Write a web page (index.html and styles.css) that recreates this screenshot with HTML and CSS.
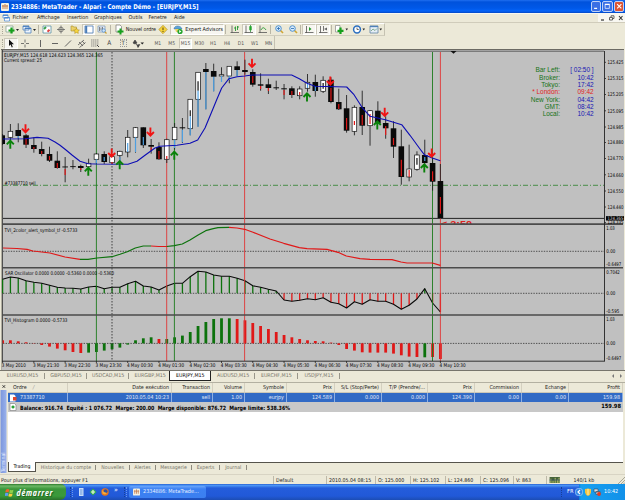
FILE: index.html
```
<!DOCTYPE html>
<html lang="fr">
<head>
    <meta charset="UTF-8">
    <meta name="viewport" content="width=device-width, initial-scale=1.0">
    <title>2334886: MetaTrader - Alpari</title>
    <link rel="stylesheet" href="styles.css">
</head>
<body>

    <!-- Title bar -->
    <header class="titlebar">
        <svg class="app-icon" viewBox="0 0 8 8"><rect width="8" height="8" rx="1" fill="#f4f1e2"/><path d="M1 3h6M2 2v4M4 1v5M6 2v4" stroke="#c07b4e" stroke-width=".9"/></svg>
        <svg class="title-text" viewBox="0 0 190 10"><text x="0" y="7.4" textLength="187.5" lengthAdjust="spacingAndGlyphs">2334886: MetaTrader - Alpari - Compte Démo - [EURJPY,M15]</text></svg>
        <div class="win-buttons">
            <svg viewBox="0 0 10 10"><path d="M2.5 7.5h3.5" stroke="#fff" stroke-width="1.4"/></svg>
            <svg viewBox="0 0 10 10"><path d="M2.5 3v4.5h5V3z" fill="none" stroke="#fff" stroke-width=".8"/><path d="M2.2 2.8h5.6" stroke="#fff" stroke-width="1.3"/></svg>
            <svg class="close" viewBox="0 0 10 10"><path d="M2.5 2.5l5 5M7.5 2.5l-5 5" stroke="#fff" stroke-width="1.3"/></svg>
        </div>
    </header>

    <!-- Menu -->
    <nav class="menu">
        <svg class="menu-icon" viewBox="0 0 8 8"><path d="M1 1h5v3H1zM2.5 3.5h5v3.5h-5z" fill="#fff" stroke="#5b93d8" stroke-width=".8"/><path d="M1 1.3h5M2.5 3.8h5" stroke="#3f80d0"/></svg>
        <span class="m1">Fichier</span><span class="m2">Affichage</span><span class="m3">Insertion</span><span class="m4">Graphiques</span><span class="m5">Outils</span><span class="m6">Fenetre</span><span class="m7">Aide</span>
        <div class="mdi-buttons">
            <svg viewBox="0 0 9 8"><path d="M3 6h3" stroke="#333" stroke-width="1.2"/></svg>
            <svg viewBox="0 0 9 8"><path d="M2.5 3.5h3v2.5h-3zM4 3.5V1.8h3v2.7H5.5" fill="none" stroke="#444" stroke-width=".8"/></svg>
            <svg viewBox="0 0 9 8"><path d="M3 2l3.5 4M6.5 2L3 6" stroke="#333" stroke-width="1.1"/></svg>
        </div>
    </nav>

    <!-- Standard toolbar -->
    <div class="toolbar main-bar">
        <i class="grip"></i>
        <span class="tool w17"><svg viewBox="0 0 14 11"><path d="M1 2h7v6H1z" fill="#fff" stroke="#7d9c8b" stroke-width=".7"/><path d="M6.5 3.5v6M3.5 6.5h6" stroke="#16a01c" stroke-width="2.2"/><path d="M11 5h3l-1.5 2z" fill="#222"/></svg></span>
        <span class="tool w17"><svg viewBox="0 0 14 11"><path d="M1 2h6v4H1zM3 4h6v5H3z" fill="#eef5fd" stroke="#5484bd" stroke-width=".8"/><path d="M1 2.3h6M3 4.4h6" stroke="#3f78bd"/><path d="M11 5h3l-1.5 2z" fill="#222"/></svg></span>
        <i class="sep"></i>
        <span class="tool"><svg viewBox="0 0 14 11"><path d="M3 2h8v7H3z" fill="#fff" stroke="#5e92a6" stroke-width=".8"/><path d="M4 5l2-2" stroke="#36a04a" stroke-width="2"/><path d="M7.5 7.8l2-2" stroke="#d44" stroke-width="2"/></svg></span>
        <span class="tool"><svg viewBox="0 0 14 11"><circle cx="7" cy="5.5" r="2.3" fill="none" stroke="#666" stroke-width=".8"/><path d="M7 1.5v8M3 5.5h8" stroke="#666" stroke-width=".8"/></svg></span>
        <span class="tool"><svg viewBox="0 0 14 11"><path d="M3 3V2h2l.5 1h3v4H3z" fill="#ecd169" stroke="#a8902d" stroke-width=".6"/><path d="M8.5 4l.9 1.8 2 .3-1.4 1.3.3 2-1.8-1-1.8 1 .3-2L5.6 6.1l2-.3z" fill="#f8d742" stroke="#a88416" stroke-width=".5"/></svg></span>
        <span class="tool on"><svg viewBox="0 0 14 11"><path d="M3 2h8v7H3z" fill="#fff" stroke="#4a7cb8" stroke-width=".8"/><path d="M4.2 2v7" stroke="#4a7cb8" stroke-width="2"/></svg></span>
        <span class="tool"><svg viewBox="0 0 14 11"><path d="M3 2h7v6H3z" fill="#e5eefa" stroke="#7b95b5" stroke-width=".7"/><path d="M4.5 3v4M6 3.5v3M7.5 3v4" stroke="#555" stroke-width=".7"/><circle cx="8.7" cy="6.5" r="1.7" fill="#cde4fb" stroke="#4a86c4" stroke-width=".7"/><path d="M10 8l1.5 1.5" stroke="#caa037" stroke-width="1.2"/></svg></span>
        <i class="sep"></i>
        <span class="tool order"><svg viewBox="0 0 14 11"><path d="M4 1h4l1.5 1.5V8H4z" fill="#fff" stroke="#777" stroke-width=".7"/><path d="M8.5 4.5v6M5.5 7.5h6" stroke="#16a01c" stroke-width="2"/></svg>Nouvel ordre</span>
        <span class="tool"><svg viewBox="0 0 14 11"><path d="M7 1.3l4.2 4.2L7 9.7 2.8 5.5z" fill="#f7d43c" stroke="#a98718" stroke-width=".6"/><path d="M7 3.5v2.7M7 7v1" stroke="#554310"/></svg></span>
        <span class="tool on expert"><svg viewBox="0 0 14 11"><path d="M3 5c0-4 7-4 8 0z" fill="#5da4d8" stroke="#386f9c" stroke-width=".5"/><path d="M4 5h4v3H5z" fill="#efd065"/><circle cx="9" cy="7.5" r="2.6" fill="#23a52c"/><path d="M8.2 6v3l2.2-1.5z" fill="#fff"/></svg>Expert Advisors</span>
        <i class="sep s4"></i>
        <span class="tool"><svg viewBox="0 0 14 11"><path d="M4 1.5V9M2.5 8.5h8.5" stroke="#555" stroke-width=".8"/><path d="M6 4h1.5M7.5 2.5V7M9.5 2v4M9.5 3H11" stroke="#279832" stroke-width=".9" fill="none"/></svg></span>
        <span class="tool on"><svg viewBox="0 0 14 11"><path d="M4 1.5V9M2.5 8.5h8.5" stroke="#555" stroke-width=".8"/><path d="M8.5 1v7" stroke="#178a22" stroke-width=".7"/><path d="M7.3 2.2h2.4v4H7.3z" fill="#23a52c"/></svg></span>
        <span class="tool"><svg viewBox="0 0 14 11"><path d="M4 1.5V9M2.5 8.5h8.5" stroke="#555" stroke-width=".8"/><path d="M5 6c1.5-3 3-3 5 0" stroke="#279832" stroke-width=".9" fill="none"/></svg></span>
        <i class="sep"></i>
        <span class="tool"><svg viewBox="0 0 14 11"><path d="M8.5 6.5L11 9" stroke="#cfa534" stroke-width="1.6"/><circle cx="6.5" cy="4.5" r="2.8" fill="#d6ebfc" stroke="#4187cb" stroke-width=".9"/><path d="M5 4.5h3M6.5 3v3" stroke="#2769b0" stroke-width=".8"/></svg></span>
        <span class="tool"><svg viewBox="0 0 14 11"><path d="M8.5 6.5L11 9" stroke="#cfa534" stroke-width="1.6"/><circle cx="6.5" cy="4.5" r="2.8" fill="#d6ebfc" stroke="#4187cb" stroke-width=".9"/><path d="M5 4.5h3" stroke="#2769b0" stroke-width=".8"/></svg></span>
        <i class="sep"></i>
        <span class="tool on"><svg viewBox="0 0 14 11"><path d="M4.5 2v7M3 8.5h8.5" stroke="#555" stroke-width=".8"/><path d="M7 3v4l2.5-2z" fill="#239a2d"/></svg></span>
        <span class="tool on"><svg viewBox="0 0 14 11"><path d="M4.5 2v7M3 8.5h8.5M7.5 2v5" stroke="#555" stroke-width=".8"/><path d="M11 3.5v3L8 5z" fill="#666"/></svg></span>
        <i class="sep"></i>
        <span class="tool w17"><svg viewBox="0 0 14 11"><path d="M1.5 1.5H6V8H1.5z" fill="#fff" stroke="#888" stroke-width=".7"/><path d="M6.5 3.5v6.5M3.5 6.8h6" stroke="#16a01c" stroke-width="2.2"/><path d="M11.5 4.5h2.5l-1.25 2z" fill="#222"/></svg></span>
        <span class="tool w17"><svg viewBox="0 0 14 11"><circle cx="6" cy="5.5" r="3.4" fill="#fff" stroke="#2a6ec0" stroke-width="1.5"/><path d="M6 3.5v2h1.8" fill="none" stroke="#333" stroke-width=".7"/><path d="M11.5 4.5h2.5l-1.25 2z" fill="#222"/></svg></span>
        <span class="tool w17"><svg viewBox="0 0 14 11"><path d="M2 2h8v7H2z" fill="#e5eef6" stroke="#6384a4" stroke-width=".8"/><path d="M2 2.5h8" stroke="#4e80b8" stroke-width="1.3"/><path d="M3 7l2-2 2 1.5 2-2" fill="none" stroke="#6a9d78" stroke-width=".8"/><path d="M11.5 4.5h2.5l-1.25 2z" fill="#222"/></svg></span>
    </div>

    <!-- Line studies and periods -->
    <div class="toolbar draw-bar">
        <i class="grip"></i>
        <span class="tool on"><svg viewBox="0 0 14 11"><path d="M5 1.5v6.5l1.6-1.5 1.2 3 1-.5-1.1-2.7H10z" fill="#111"/></svg></span>
        <span class="tool"><svg viewBox="0 0 14 11"><path d="M7 1.5v3M7 6.5v3M3 5.5h3M8 5.5h3" stroke="#555" stroke-width=".8"/></svg></span>
        <i class="sep"></i>
        <span class="tool"><svg viewBox="0 0 14 11"><path d="M7.5 2v7" stroke="#555" stroke-width=".9"/></svg></span>
        <span class="tool"><svg viewBox="0 0 14 11"><path d="M5 5.5h6" stroke="#555" stroke-width=".9"/></svg></span>
        <span class="tool"><svg viewBox="0 0 14 11"><path d="M4 8.5l6-6" stroke="#555" stroke-width=".9"/></svg></span>
        <span class="tool"><svg viewBox="0 0 14 11"><path d="M3 7l6-5M4.5 9.5l6-5M4 4l4 4M7 3l3 3" stroke="#555" stroke-width=".8"/></svg></span>
        <span class="tool"><svg viewBox="0 0 14 11"><path d="M3 2h8M3 4h8M3 6h8M3 8h6" stroke="#666" stroke-width=".7" stroke-dasharray="1.5 .5"/><path d="M9 7l2 2" stroke="#444"/></svg></span>
        <span class="tool letter">A</span>
        <span class="tool letter boxed"><b>T</b></span>
        <span class="tool"><svg viewBox="0 0 14 11"><path d="M3 5l2-3 2 3-2 1zM6 6l3 3M8 9.5L9.8 6.5 7 7z" fill="#444" stroke="#444" stroke-width=".7"/><path d="M10.5 4.5H14l-1.75 2z" fill="#222"/></svg></span>
        <i class="sep s8"></i>
        <span class="tool period">M1</span><span class="tool period">M5</span><span class="tool period on">M15</span><span class="tool period">M30</span><span class="tool period">H1</span><span class="tool period">H4</span><span class="tool period">D1</span><span class="tool period">W1</span><span class="tool period">MN</span>
    </div>

    <!-- Chart, filled in by chart.js -->
    <svg id="chart" class="chart" viewBox="0 49 625 321" width="625" height="321"></svg>

    <div class="chart-tabs">
        <span>EURUSD,M15</span><span>GBPUSD,M15</span><span>USDCAD,M15</span><span>EURGBP,M15</span><span class="active">EURJPY,M15</span><span class="wide">AUDUSD,M15</span><span class="wide">EURCHF,M15</span><span>USDJPY,M15</span>
        <svg class="scroll" viewBox="0 0 14 8"><path d="M4 2v4L2 4zM10 2v4l2-2z" fill="#777"/></svg>
    </div>

    <!-- Terminal -->
    <section class="terminal">
        <aside class="side">
            <svg viewBox="0 0 7 7"><path d="M1.8 2l3 3M4.8 2l-3 3" stroke="#222"/></svg>
            <div class="side-label">Terminal</div>
        </aside>
        <div class="terminal-body">
            <div class="row head">
                <span class="first">Ordre <em>/</em></span><span>Date exécution</span><span>Transaction</span><span>Volume</span><span>Symbole</span><span>Prix</span><span>S/L (Stop/Perte)</span><span>T/P (Prendre/...</span><span>Prix</span><span>Commission</span><span>Echange</span><span>Profit</span>
            </div>
            <div class="row selected">
                <span class="first"><svg viewBox="0 0 8 8"><path d="M1 .5h4l1.5 1.5v5.5H1z" fill="#fff"/><path d="M4 3h3.5v3.5H4z" fill="#e0452c"/></svg>73387710</span><span>2010.05.04 10:23</span><span>sell</span><span>1.00</span><span>eurjpy</span><span>124.589</span><span>0.000</span><span>0.000</span><span>124.390</span><span>0.00</span><span>0.00</span><span>159.98</span>
            </div>
            <div class="balance">
                <svg class="doc" viewBox="0 0 8 8"><path d="M1 .5h4.5L7 2v5.5H1z" fill="#fff" stroke="#777" stroke-width=".6"/><path d="M4 2.5v3M2.5 4h3" stroke="#159a24" stroke-width="1.3"/></svg>
                <svg class="balance-text" viewBox="0 0 275 9"><text x="0" y="6.5" textLength="270" lengthAdjust="spacingAndGlyphs">Balance: 916.74 &#160;Equité : 1 076.72 &#160;Marge: 200.00 &#160;Marge disponible: 876.72 &#160;Marge limite: 538.36%</text></svg>
                <span class="total">159.98</span>
            </div>
            <div class="empty"></div>
            <div class="terminal-tabs">
                <span class="active">Trading</span><span class="t1">Historique du compte</span><span class="t2">Nouvelles</span><span class="t3">Alertes</span><span class="t4">Messagerie</span><span class="t5">Experts</span><span class="t6">Journal</span>
            </div>
        </div>
    </section>

    <!-- Status bar -->
    <footer class="status">
        <span class="help">Pour plus d'informations, appuyer F1</span><span class="c53">Default</span><span class="c49">2010.05.04 08:15</span><span class="c35">O: 125.000</span><span class="c35">H: 125.102</span><span class="c35">L: 124.860</span><span class="c33">C: 125.096</span><span class="c33">V: 863</span>
        <span class="traffic"><svg viewBox="0 0 12 7"><path d="M0 0h12v7H0z" fill="#45633a"/><path d="M1.5 7V2M4 7V4M6.5 7V1M9 7V3M11 7V1" stroke="#c8cf70" stroke-width="1"/><path d="M0 3.5h12" stroke="#314a6c" stroke-width=".8"/></svg>140/1 kb</span>
        <svg class="resize" viewBox="0 0 8 8"><path d="M1 8l7-7M4 8l4-4M6.5 8L8 6.5" stroke="#aaa695"/></svg>
    </footer>

    <!-- Windows taskbar -->
    <div class="taskbar">
        <div class="start">
            <svg viewBox="0 0 10 10"><path d="M1 2q2-1.5 3.8-.3L4 5Q2.2 4 .3 5z" fill="#f0622d"/><path d="M5.4 2q2 1 4 0L8.7 5.2q-2 1-4 0z" fill="#8ed04b"/><path d="M.2 5.7q1.8-1 3.6 0L3 9Q1.3 8-.5 9z" fill="#5c9cf2"/><path d="M4.5 6q2 1 4 0L7.7 9.2q-2 1-4 0z" fill="#f9d03a"/></svg>
            démarrer
        </div>
        <i class="dots"></i>
        <div class="quick">
            <svg viewBox="0 0 8 8"><path d="M2 0h4.5v8H2z" fill="#c9ddf8"/><path d="M3 2h2.5M3 4h2.5M3 6h2.5" stroke="#4b80d1" stroke-width=".8"/></svg>
            <svg viewBox="0 0 8 8"><path d="M4 .5L7.5 4 4 7.5.5 4z" fill="#35b04a"/><path d="M2 4h4M4 2v4" stroke="#e8f8e0" stroke-width="1.2"/></svg>
            <svg viewBox="0 0 8 8"><circle cx="4" cy="4" r="3.7" fill="#e8751c"/><circle cx="4.5" cy="3.3" r="2" fill="#31529f"/><path d="M1 2l2 2 3 1-2 1.5-2.5-1z" fill="#f6ad3a"/></svg>
            <span>»</span>
        </div>
        <i class="dots"></i>
        <div class="task"><svg viewBox="0 0 8 8"><rect width="8" height="8" rx="1" fill="#f4f1e2"/><path d="M1 3h6M2 2v4M4 1v5M6 2v4" stroke="#c07b4e" stroke-width=".9"/></svg>2334886: MetaTrade...</div>
        <i class="dots last"></i>
        <span class="lang">FR</span>
        <div class="tray">
            <svg viewBox="0 0 8 8"><circle cx="4" cy="4" r="3.8" fill="#2f86e8" stroke="#b8dcff" stroke-width=".6"/><path d="M5 2L3 4l2 2" fill="none" stroke="#fff" stroke-width="1.2"/></svg>
            <svg viewBox="0 0 8 8"><path d="M1 1q3 0 3-.7Q4 1 7 1v3.5Q6.5 7 4 8 1.5 7 1 4.5z" fill="#f3c341"/><path d="M4 1v6" stroke="#fff1b0"/></svg>
            <svg viewBox="0 0 8 8"><path d="M1 1h4v3H1zM3 3.5h4v3H3z" fill="#cfe0ee" stroke="#345" stroke-width=".6"/><circle cx="6" cy="6" r="1.9" fill="#e23b24"/></svg>
            <span>10:42</span>
        </div>
    </div>

    <script src="chart.js"></script>
</body>
</html>
```
FILE: styles.css
```
* {
    box-sizing: border-box;
    margin: 0;
    padding: 0;
}

body {
    width: 625px;
    height: 500px;
    overflow: hidden;
    display: flex;
    flex-direction: column;
    background-color: #ece9d8;
    font-family: "DejaVu Sans Condensed", "DejaVu Sans", sans-serif;
    font-stretch: condensed;
    font-size: 5.4px;
    line-height: 1;
    color: #1c1c1c;
    white-space: nowrap;
}

svg {
    display: block;
    flex: none;
}

/* Title bar */
.titlebar {
    height: 13px;
    display: flex;
    align-items: center;
    padding-left: 1px;
    background: linear-gradient(#1f6ff0 0, #0052dc 2px, #0058e8 8px, #0463f8 11px, #0447c4 13px);
    color: #fff;
}

.app-icon {
    width: 8px;
    height: 8px;
    margin-right: 2px;
}

.title-text {
    width: 190px;
    height: 10px;
    fill: #fff;
    font-size: 6.6px;
    font-weight: bold;
}

.win-buttons {
    display: flex;
    gap: 1px;
    margin-left: auto;
    padding-right: 1px;
}

.win-buttons svg {
    width: 10.5px;
    height: 10.5px;
    border: 0.5px solid #bdd0f7;
    border-radius: 2px;
    background-color: #3a6fe4;
}

.win-buttons .close {
    background-color: #dd5533;
}

/* Menu */
.menu {
    height: 10px;
    display: flex;
    align-items: center;
    padding-left: 2px;
    border-top: 1px solid #f8f7f0;
    border-bottom: 1px solid #d0ccbb;
}

.menu-icon {
    width: 8px;
    height: 8px;
    margin-right: 2.5px;
}

.m1 { width: 24.5px; }
.m2 { width: 30px; }
.m3 { width: 27px; }
.m4 { width: 34.5px; }
.m5 { width: 20px; }
.m6 { width: 25.5px; }
.m7 { width: 20px; }

.mdi-buttons {
    display: flex;
    margin-left: auto;
    background-color: #f8f7f1;
}

.mdi-buttons svg {
    width: 9px;
    height: 8px;
}

/* Toolbars */
.toolbar {
    display: flex;
    align-items: center;
    align-self: flex-start;
    border-right: 1px solid #c5c2b2;
    border-bottom: 1px solid #d0cdbd;
}

.main-bar {
    height: 13px;
    width: 385px;
    border-top: 1px solid #fff;
}

.draw-bar {
    height: 13px;
    width: 275px;
    padding-top: 1px;
    border-bottom: none;
}

.grip {
    width: 1px;
    height: 8px;
    margin: 0 1px 0 2px;
    border-left: 1px dotted #aaa797;
}

.sep {
    width: 1px;
    height: 9px;
    margin: 0 1px 0 0.5px;
    background-color: #b9b6a6;
}

.sep.s4 { margin: 0 2px 0 1px; }
.sep.s8 { margin: 0 1px 0 6px; }

.tool {
    width: 13.85px;
    height: 11px;
    display: flex;
    align-items: center;
    justify-content: center;
    flex: none;
}

.tool svg {
    width: 14px;
    height: 11px;
}

.tool.on {
    background-color: #f7f6f1;
    border: 1px solid #cbc8b9;
    border-right-color: #fff;
    border-bottom-color: #fff;
}

.w17 { width: 16.8px; }

.order {
    width: 44.5px;
    justify-content: flex-start;
    letter-spacing: -0.1px;
}

.expert {
    width: 54px;
    justify-content: flex-start;
}

.letter {
    font-size: 6.5px;
    color: #444;
}

.boxed b {
    padding: 0 1px;
    border: 1px dotted #999;
    font-weight: normal;
    font-size: 6px;
}

.period {
    font-size: 5px;
    color: #555;
}

/* Chart */
.chart {
    width: 625px;
    height: 321px;
    background-color: #ece9d8;
    font-family: "DejaVu Sans Condensed", "DejaVu Sans", sans-serif;
    font-size: 5.1px;
}

.chart .clock {
    font-family: "Liberation Sans", Arial, sans-serif;
    font-size: 6.5px;
}

.chart .countdown {
    font-family: "Liberation Sans", Arial, sans-serif;
    font-size: 9px;
    font-weight: bold;
}

.chart-tabs {
    height: 12px;
    display: flex;
    border-top: 1px solid #77756c;
    color: #77756b;
    font-size: 5.3px;
}

.chart-tabs span {
    width: 42.1px;
    height: 10px;
    line-height: 9px;
    text-align: center;
}

.chart-tabs span:first-child {
    width: 45px;
}

.chart-tabs .wide {
    width: 43.3px;
}

.chart-tabs span:not(.active) {
    background: linear-gradient(#99968a, #99968a) no-repeat right center / 1px 6px;
}

.chart-tabs .active {
    margin-left: -2px;
    color: #000;
    background-color: #fff;
    border: 1px solid #222;
    border-top: none;
}

.scroll {
    width: 14px;
    height: 8px;
    margin: 1px 1px 0 auto;
}

/* Terminal */
.terminal {
    height: 92px;
    display: flex;
    border-top: 1px solid #b3b0a1;
}

.side {
    width: 8px;
    padding: 0 1px;
}

.side svg {
    width: 6px;
    height: 7px;
}

.side-label {
    width: 5.5px;
    height: 83px;
    padding-top: 1px;
    background: linear-gradient(90deg, #9ab2ec, #7b96dc);
    color: #e2eaff;
    writing-mode: vertical-rl;
    transform: rotate(180deg);
    font-size: 5.2px;
    line-height: 5.5px;
}

.terminal-body {
    width: 615px;
    display: flex;
    flex-direction: column;
}

.row {
    display: grid;
    grid-template-columns: 60px 104px 41px 32px 42px 48px 47px 46px 47px 47px 47px 54px;
    text-align: right;
    flex: none;
}

.row span {
    padding-right: 2px;
    border-right: 1px solid #d4d0c0;
    overflow: hidden;
}

.row .first {
    display: flex;
    align-items: center;
    text-align: left;
}

.head {
    height: 10px;
    line-height: 9px;
    border-bottom: 1px solid #cbc7b8;
}

.head .first {
    padding-left: 5px;
}

.head em {
    margin-left: 6px;
    color: #999;
}

.selected {
    height: 9px;
    line-height: 9px;
    background-color: #316ac5;
    color: #e2ebfa;
}

.selected span {
    border-right-color: #8fb0e2;
}

.row svg,
.balance .doc {
    width: 8px;
    height: 8px;
    margin: 0 3px 0 1px;
}

.balance {
    height: 10px;
    display: flex;
    align-items: center;
    background-color: #c8c8c8;
    font-size: 5.7px;
    font-weight: bold;
    color: #000;
}

.balance-text {
    width: 275px;
    height: 9px;
}

.total {
    margin-left: auto;
    padding-right: 2px;
}

.empty {
    flex: 1;
    background-color: #fff;
    border-bottom: 1px solid #55534b;
}

.terminal-tabs {
    height: 11px;
    display: flex;
    color: #77756b;
    font-size: 5.2px;
}

.terminal-tabs span {
    height: 10px;
    line-height: 9px;
    text-align: center;
    background: linear-gradient(#8d8a7e, #8d8a7e) no-repeat right 2px / 1px 5px;
}

.terminal-tabs .active {
    width: 28px;
    margin-top: -1px;
    background: #fff;
    border: 1px solid #55534b;
    border-top: none;
    color: #000;
}

.t1 { width: 60px; }
.t2 { width: 33.5px; }
.t3 { width: 26px; }
.t4 { width: 36px; }
.t5 { width: 28px; }
.t6 { width: 27.5px; }

/* Status bar */
.status {
    height: 10px;
    display: flex;
    align-items: center;
    border-top: 1px solid #d8d4c4;
    font-size: 5.25px;
}

.status span {
    height: 8px;
    line-height: 8px;
    padding-left: 2px;
    border-right: 1px solid #bdb9a9;
}

.status .help {
    width: 274px;
    padding-left: 1px;
}

.c53 { width: 53px; }
.c49 { width: 49px; }
.c35 { width: 35px; }
.c33 { width: 33px; }

.status .traffic {
    display: flex;
    align-items: center;
    border-right: none;
}

.traffic svg {
    width: 11.5px;
    height: 6px;
    margin-right: 13px;
}

.resize {
    width: 8px;
    height: 8px;
    margin-left: auto;
}

/* Taskbar */
.taskbar {
    flex: 1;
    display: flex;
    align-items: center;
    background: linear-gradient(#2a62d0 0, #4a93f5 1.5px, #245ddb 4px, #2159d8 12px, #1c4db4 16px);
    color: #fff;
}

.start {
    width: 66px;
    height: 100%;
    display: flex;
    align-items: center;
    padding: 0 0 0 5px;
    border-radius: 0 5px 6px 0;
    background: linear-gradient(#2c7a2c 0, #6cb865 2px, #3b963b 5px, #3a9a3a 12px, #2a6f2a 16px);
    font-family: "Open Sans", "Liberation Sans", sans-serif;
    font-size: 9px;
    font-weight: bold;
    font-style: italic;
    letter-spacing: 0.8px;
    text-shadow: 1px 1px 1px #1d5a1d;
}

.start svg {
    width: 9px;
    height: 9px;
    margin-right: 2.5px;
}

.dots {
    width: 3px;
    height: 10px;
    margin: 0 3px 0 4px;
    border-left: 1px dotted #173e97;
    border-right: 1px dotted #6b9af0;
}

.quick {
    display: flex;
    align-items: center;
    width: 43px;
    gap: 4px;
    margin-left: 1px;
}

.quick svg {
    width: 8px;
    height: 8px;
}

.quick span {
    font-size: 7px;
    margin: -4px 0 0 1px;
}

.task {
    width: 77px;
    height: 12px;
    display: flex;
    align-items: center;
    margin-left: -1px;
    padding-left: 4px;
    border-radius: 2px;
    background: linear-gradient(#6aa5fa, #3c81f3 3px, #3b7ff0);
    color: #e7f0ff;
    font-size: 5.5px;
}

.task svg {
    width: 7px;
    height: 8px;
    margin-right: 3px;
}

.dots.last {
    margin-left: auto;
    border-right: none;
}

.lang {
    width: 8px;
    font-size: 5.6px;
}

.tray {
    width: 50px;
    height: 100%;
    display: flex;
    align-items: center;
    gap: 1px;
    background: linear-gradient(90deg, transparent 4px, #0f7cdc 4px, #17a0f0 6px, #1291e9);
}

.tray svg {
    width: 8px;
    height: 8px;
}

.tray span {
    margin-left: 2px;
    font-size: 5.5px;
}
```
FILE: chart.js
```
var NS = 'http://www.w3.org/2000/svg';
var chart = document.getElementById('chart');
var RED = '#e01818', GREEN = '#0c720c', BLUE = '#0c0cb4', BULL = '#4e9fe0';

function add(tag, attrs, text) {
    var el = document.createElementNS(NS, tag);
    for (var key in attrs) el.setAttribute(key, attrs[key]);
    if (text) el.textContent = text;
    chart.appendChild(el);
    return el;
}

function line(x1, y1, x2, y2, color, width, dash) {
    add('line', {x1: x1, y1: y1, x2: x2, y2: y2, stroke: color, 'stroke-width': width || 1, 'stroke-dasharray': dash || 'none'});
}

function rect(x, y, w, h, fill, stroke) {
    add('rect', {x: x, y: y, width: w, height: h, fill: fill, stroke: stroke || 'none', 'stroke-width': 0.7});
}

function label(x, y, text, length, attrs) {
    attrs = attrs || {};
    attrs.x = x;
    attrs.y = y;
    if (length) {
        attrs.textLength = length;
        attrs.lengthAdjust = 'spacingAndGlyphs';
    }
    add('text', attrs, text);
}

function curve(points, color, width) {
    add('polyline', {points: points, fill: 'none', stroke: color, 'stroke-width': width || 1, 'stroke-linejoin': 'round'});
}

function barX(i) {
    return 2.6 + i * 7.818;
}

// frame
rect(0, 49, 625, 321, '#ece9d8');
rect(1, 49, 623, 321, '#b0ada0');
rect(2, 50, 622, 320, '#c0c0c0');
line(1, 49.5, 624, 49.5, '#6c6a63');
line(2.5, 50, 2.5, 361, '#333', 0.8);
line(2, 51.2, 604, 51.2, '#333', 0.7);

// countdown next to the last bar, cut off by the panel border
label(441, 226.5, '<  2:50', 31, {'class': 'countdown', fill: '#e02020'});
rect(437, 224, 42, 6, '#c0c0c0');

// levels
line(3, 185.3, 604, 185.3, '#2b822b', 0.8, '5 2 1 2');
line(3, 218.4, 604, 218.4, '#111', 0.9);
[251.3, 293.3, 343.4].forEach(function (y) {
    line(3, y, 604, y, '#333', 0.8, '1.4 1.2');
});

// SAR oscillator
var sar = [279.3, 277, 278, 280.7, 282.3, 283.3, 285.3, 287.3, 288, 288.3, 289, 287, 286.3, 288.7, 287.3, 287.3, 283.7, 281.3, 286,
    287, 290, 286, 283.3, 283.3, 276.7, 271.3, 272, 275, 276.3, 276.3, 278.3, 280.7, 285.7, 287.3, 289.3, 291, 300, 301.3, 300.3,
    298.7, 299.7, 297.7, 302.3, 303.7, 308, 301.7, 304.3, 299.7, 301.3, 301.3, 304.3, 309.3, 305.3, 299, 288.7, 303, 312];
sar.forEach(function (y, i) {
    line(barX(i), 293.3, barX(i), y, y < 293.3 ? GREEN : RED, 1.3);
});
curve(sar.map(function (y, i) { return barX(i) + ',' + y; }).join(' '), '#0a0a0a', 1.1);

// TVI histogram
var hist = [-3, -3, -2, -1, 0.3, 1.7, 3.3, 5.3, 7, 8.7, 9.7, 9.3, 8.7, 7.3, 6, 4.3, 1.3, -3, -5, -6, -4.3, -4.3, -6, -7.7,
    -11.3, -17.3, -21.3, -24.3, -25, -25, -24.3, -23, -20.3, -17.3, -14.3, -11.3, -8.3, -6, -4.3, -3, -2.3, -2, -0.7, 1.7,
    5.7, 7.3, 9, 9.3, 9.3, 9.3, 10.3, 12, 13.3, 13.7, 14, 13.7, 15.7];
hist.forEach(function (h, i) {
    var up = (i >= 11 && i <= 29 && i !== 20) || i === 54;
    rect(Math.max(2.6, barX(i) - 1.4), Math.min(343.3, 343.3 + h), i ? 2.8 : 1.4, Math.abs(h), up ? GREEN : RED);
});

// vertical markers
line(112, 52, 112, 361, '#333', 0.9, '1.5 1.5');
[96.4, 174.4, 432.5].forEach(function (x) { line(x, 52, x, 361, '#1c7a1c', 0.9); });
[166.7, 244.6, 440.4].forEach(function (x) { line(x, 52, x, 361, '#e03535', 0.9); });

// high, body top, body bottom, low, body color, inner mark [from, to, color]
var candles = [
    [134, 135.3, 144, 145, 'b'],
    [124, 131.3, 137.3, 142, 'w'],
    [123.3, 130, 136, 142.3, 'b', 136, 138, BULL],
    [134, 135.3, 144.7, 148, 'b', 138, 144.7, RED],
    [137.3, 145, 149, 152.7, 'b', 147, 149, RED],
    [141.7, 149, 154, 156.3, 'b', 151, 154, RED],
    [146.7, 154, 160.7, 162, 'b', 156, 160, RED],
    [151.3, 160.7, 168, 168.7, 'b', 163, 168, RED],
    [157, 166.5, 167.2, 182.3, 'b', 169, 175, RED],
    [160, 166.2, 167, 169.3, 'b'],
    [164.7, 166, 168, 172, 'b', 168, 170, RED],
    [158.7, 163.3, 166.7, 171.3, 'w'],
    [153, 154, 159.3, 163, 'w', 159.3, 163, BULL],
    [151.3, 154, 162, 164, 'b', 157, 161, BULL],
    [154, 156.7, 162.7, 163.3, 'w', 162, 164, RED],
    [150.7, 151.3, 155.3, 163, 'w', 157, 163, BULL],
    [130, 137.3, 152, 157.3, 'w', 143, 152, BULL],
    [127, 127.7, 137.3, 152.7, 'w', 137.3, 152, BULL],
    [127.3, 127.3, 145.3, 148, 'b', 137, 145, BULL],
    [139, 145, 146.7, 153.7, 'b', 147.3, 151, RED],
    [142.3, 147, 159.3, 159.7, 'b', 151, 159, RED],
    [138.7, 139.7, 159.3, 163, 'w', 156, 159, RED],
    [123, 127.3, 139.7, 149.7, 'w', 139.7, 148, BULL],
    [118, 127.3, 128.3, 143, 'b', 129.7, 142.3, BULL],
    [99.3, 99.3, 128.7, 135.3, 'w', 110.3, 116.3, '#111', 116.3, 135.3, BULL],
    [72.3, 72.3, 99.3, 126.7, 'w', 81.3, 90.7, '#111', 90.7, 126.7, BULL],
    [63, 69, 72, 109.3, 'b', 72, 109.3, BULL],
    [63.7, 71, 76.7, 91.3, 'b', 76.7, 91.3, BULL],
    [67.3, 74.7, 76, 82, 'w', 76, 82, BULL],
    [66.3, 66.3, 76, 83.3, 'w', 76, 80, BULL],
    [61.3, 66.3, 70, 76, 'b', 70, 76, BULL],
    [59.7, 70, 72, 74.7, 'b'],
    [69.3, 72, 84.7, 86.7, 'b', 76, 83, RED],
    [73.3, 84.3, 85.7, 90.7, 'b', 86, 89, RED],
    [78.7, 84.3, 88, 94, 'b', 88, 91, RED],
    [80.7, 87.3, 88.3, 90, 'b'],
    [84, 88.3, 89.3, 99.3, 'b', 90, 95, RED],
    [86.3, 88.3, 95, 98, 'b', 91, 95, RED],
    [86.3, 89, 95.7, 99.3, 'w', 92, 95, RED],
    [74, 82.3, 88.3, 91.7, 'w', 83, 88, BULL],
    [74.7, 82, 91, 96.7, 'b', 86, 91, BULL],
    [76.3, 80.3, 91.3, 93, 'w', 83, 88.7, '#111'],
    [77.3, 79.7, 102, 103.3, 'b', 88, 101, RED],
    [88.7, 102, 109.3, 110, 'b', 104, 109, RED],
    [95, 108.3, 130.7, 132.7, 'b', 118, 129.7, RED],
    [105.3, 107.3, 131.3, 135.3, 'w', 121, 125, RED],
    [90.7, 107, 125.7, 135, 'b', 115, 125, RED],
    [110, 110.7, 125.7, 145.7, 'w', 114, 124, RED],
    [101.3, 110.7, 123.3, 124, 'b'],
    [116.3, 123, 128.3, 138.7, 'b', 126, 135, RED],
    [121.3, 128.3, 146.7, 158, 'b', 138, 145, RED],
    [129.7, 146.3, 177, 184.7, 'b', 159.7, 176.3, RED],
    [144.7, 169, 177, 181.3, 'w', 170, 177, RED],
    [151.3, 155, 169.3, 170.7, 'w', 158, 164.7, '#111'],
    [139.7, 155, 163, 164.7, 'b', 157, 161, BULL],
    [158, 163, 181.7, 190.7, 'b', 171.3, 181, RED],
    [164, 181, 218, 218.5, 'b', 197, 213.7, RED]
];
candles.forEach(function (c, i) {
    var x = barX(i);
    line(x, c[0], x, c[3], '#222', 0.9);
    if (i === 0) {
        rect(2.6, c[1], 2.4, c[2] - c[1], '#0a0a0a');
    } else if (c[4] === 'w') {
        rect(x - 2.3, c[1], 4.6, c[2] - c[1], '#fff', '#111');
    } else {
        rect(x - 2.8, c[1], 5.6, Math.max(0.9, c[2] - c[1]), '#0a0a0a');
    }
    for (var k = 5; k < c.length; k += 3) {
        line(x, c[k], x, c[k + 1], c[k + 2], 1.2);
    }
});

// moving average
curve('3,139 25,138.7 37,137.4 48,138.3 55,142 60,145.3 66,150 72,155 80,161.3 88,163.7 97,164 128,164.3 137,161.3 145,155.3 155,148 160,146.3 177,145.3 190,143.3 197.7,140 205,128 213.3,108 217,99 221.7,88 229,78.7 237,76.7 244.7,76 252,75 291.7,75 299.3,78.7 307,83.3 315,86.3 346.7,87 354,94.7 362,107.3 370,116.3 377.7,118 385.3,119.7 401.7,124.7 410,135.3 420,149 424.3,154.7 432.3,158 440.3,160.7', BLUE, 1.1);

// signal arrows
function arrow(x, y, dir, color) {
    add('path', {
        d: 'M' + x + ' ' + (y - 4.5 * dir) + 'V' + (y + 3 * dir) + 'M' + (x - 3.5) + ' ' + y + 'L' + x + ' ' + (y + 3.6 * dir) + 'L' + (x + 3.5) + ' ' + y,
        fill: 'none', stroke: color, 'stroke-width': 1.9
    });
}
[[25.5, 128.7], [111.7, 153], [150.4, 132], [252, 63.3], [330.3, 81], [384.7, 112.3], [431.7, 153]].forEach(function (p) {
    arrow(p[0], p[1], 1, '#f01414');
});
[[10.3, 144.3], [88.3, 171.3], [119.7, 164.7], [174.3, 155.3], [307, 97], [377.3, 125], [424.3, 168]].forEach(function (p) {
    arrow(p[0], p[1], -1, '#0a820a');
});
add('path', {d: 'M450.5 51h6l-3 2.8z', fill: '#111'});

// TVI line
curve('3,248 17,248.5 27,249.3 33,251 50,253 65,257 80,259.3', RED, 1.2);
curve('80,259.3 88,259.3 97,258 112,256.7 120,254.3 127.3,251.7 135.3,248 143.3,246 151,246', GREEN, 1.2);
curve('151,246 158.7,246.5 166.7,246.5', RED, 1.2);
curve('166.7,246.5 174.3,245.7 182.3,244 190,240 197.7,235.3 205.7,230.7 213.3,228.7 218,227.7 229,227.3', GREEN, 1.2);
curve('229,227.3 237,228 244.7,229.3 253,232.3 270,239 283.7,243.3 299.3,247.7 307,248.7 327,249.3 338,252.3 346.3,256 360,258.7 370,259.3 392,259.7 401,262 407,263 432.3,263 440.3,265.3', RED, 1.2);

// panel borders and axes
[224.1, 267.8, 315].forEach(function (y) { line(2, y, 623, y, '#4b4b4b', 1.6); });
line(2, 361.2, 604.5, 361.2, '#222', 0.9);
line(604.5, 51, 604.5, 361.5, '#222', 0.9);

// captions
label(4, 56.5, 'EURJPY,M15  124.618 124.623 124.365 124.365', 99, {'xml:space': 'preserve'});
label(4, 61.7, 'Current spread: 25', 38);
label(4.5, 185, '#73387710 sell', 31);
label(4.5, 231.7, 'TVI_2color_alert_symbol_tf -0.5733', 73);
label(5, 275, 'SAR Oscillator 0.0000 0.0000 -0.5360 0.0000 -0.5360', 109);
label(4.5, 322.4, 'TVI_Histogram 0.0000 -0.5733', 63);

// price scale
[['125.425', 62.3], ['125.315', 78.5], ['125.205', 94.5], ['125.095', 110.8], ['124.985', 127], ['124.880', 142.5],
 ['124.770', 158.5], ['124.660', 174.8], ['124.550', 191], ['124.440', 207], ['124.335', 222.6]].forEach(function (p) {
    line(604.5, p[1], 606, p[1], '#222', 0.8);
    label(607.5, p[1] + 1.7, p[0], 16);
});
rect(606, 216.1, 18, 4.4, '#050505');
label(607.5, 219.9, '124.365', 16, {fill: '#d8d8d8', 'font-size': 4.6});
[['1.03', 230.4, 8.5], ['0.00', 253.1, 9], ['-0.6497', 266.2, 15], ['0.7042', 274, 13.5], ['0.00', 295.2, 9], ['-0.595', 312.9, 13],
 ['1.03', 321, 8.5], ['0.00', 345.2, 9], ['-0.6497', 359.8, 15]].forEach(function (p) {
    label(606.3, p[1], p[0], p[2]);
});

// time scale
['3 May 2010', '3 May 21:30', '3 May 22:30', '3 May 23:30', '4 May 00:30', '4 May 01:30', '4 May 02:30', '4 May 03:30', '4 May 04:30',
 '4 May 05:30', '4 May 06:30', '4 May 07:30', '4 May 08:30', '4 May 09:30', '4 May 10:30'].forEach(function (t, i) {
    var x = barX(i * 4);
    line(x, 361, x, 363, '#222', 0.8);
    label(x - 0.8, 367.4, t, i ? 26 : 24);
});

// market clock
[['Bar Left:', '[ 02:50 ]'], ['Broker:', '10:42'], ['Tokyo:', '17:42'], ['* London:', '09:42'], ['New York:', '04:42'], ['GMT:', '08:42'],
 ['Local:', '10:42']].forEach(function (row, i) {
    var y = 72.2 + i * 7.35;
    label(560, y, row[0], 0, {'class': 'clock', 'text-anchor': 'end', fill: i === 3 ? '#e02222' : '#177317'});
    label(593.7, y, row[1], 0, {'class': 'clock', 'text-anchor': 'end', fill: i === 3 ? '#e02222' : '#1616b4'});
});
```
